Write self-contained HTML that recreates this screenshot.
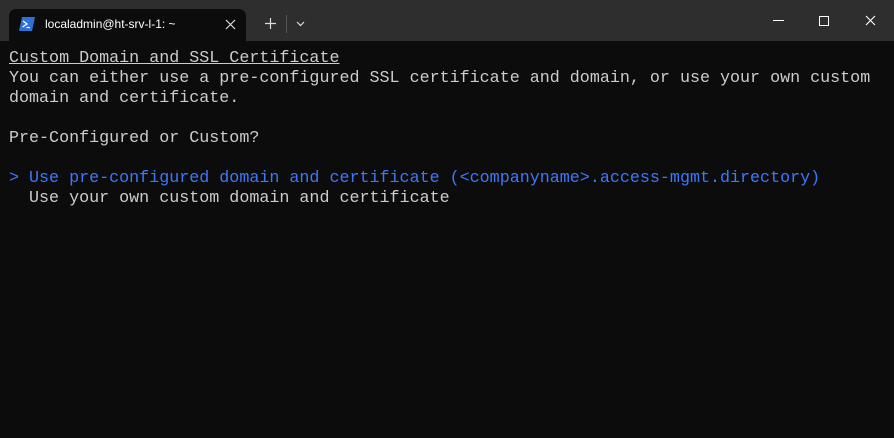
<!DOCTYPE html>
<html><head><style>
html,body{margin:0;padding:0;}
body{width:894px;height:438px;background:#0c0c0c;overflow:hidden;position:relative;font-family:"Liberation Sans",sans-serif;}
.title{position:absolute;left:0;top:0;width:894px;height:41px;background:#2e2e2e;}
.tab{position:absolute;left:9px;top:9px;width:237px;height:32px;background:#0c0c0c;border-radius:7px 7px 0 0;}
.tab .t{position:absolute;left:36px;top:8px;color:#fff;font-size:12px;}
.term{position:absolute;left:9px;top:49px;font-family:"Liberation Mono",monospace;font-size:16.7px;line-height:20px;color:#cccccc;white-space:pre;}
.b{color:#3b78ff;}
</style></head><body>
<div class="title">
<div class="tab">
<svg style="position:absolute;left:10px;top:8px" width="16" height="14" viewBox="0 0 16 14"><path d="M3 0H16L13 14H0Z" fill="#2f6fd8"/><path d="M4 4L8 7L3.5 10" stroke="#fff" stroke-width="1.3" fill="none"/><path d="M7.5 10.5H11" stroke="#fff" stroke-width="1.2"/></svg>
<div class="t">localadmin@ht-srv-l-1: ~</div>
<svg style="position:absolute;left:216px;top:10px" width="11" height="11"><path d="M1 1L10 10M10 1L1 10" stroke="#ddd" stroke-width="1.2"/></svg>
</div>
<svg style="position:absolute;left:265px;top:18px" width="11" height="11"><path d="M5.5 0V11M0 5.5H11" stroke="#ddd" stroke-width="1.2"/></svg>
<div style="position:absolute;left:286px;top:15px;width:1px;height:18px;background:#555"></div>
<svg style="position:absolute;left:296px;top:21px" width="9" height="6"><path d="M1 1L4.5 4.5L8 1" stroke="#ddd" stroke-width="1.2" fill="none"/></svg>
<div style="position:absolute;left:773px;top:20px;width:11px;height:1px;background:#fff"></div>
<div style="position:absolute;left:819px;top:16px;width:8px;height:8px;border:1px solid #fff"></div>
<svg style="position:absolute;left:865px;top:15px" width="11" height="11"><path d="M1 1L10 10M10 1L1 10" stroke="#fff" stroke-width="1.1"/></svg>
</div>
<div class="term"><span style="text-decoration:underline">Custom Domain and SSL Certificate</span>
You can either use a pre-configured SSL certificate and domain, or use your own custom
domain and certificate.

Pre-Configured or Custom?

<span class="b">&gt; Use pre-configured domain and certificate (&lt;companyname&gt;.access-mgmt.directory)</span>
  Use your own custom domain and certificate</div>
</body></html>
